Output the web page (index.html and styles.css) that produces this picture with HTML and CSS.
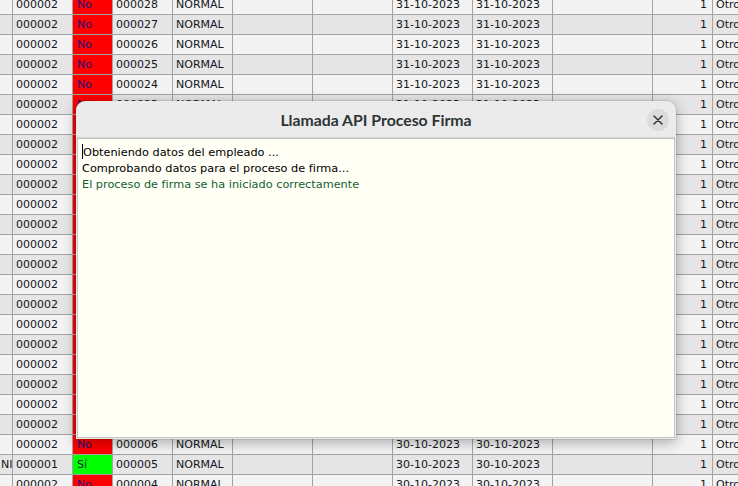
FILE: index.html
```html
<!DOCTYPE html>
<html lang="es">
<head>
<meta charset="utf-8">
<title>Llamada API Proceso Firma</title>
<link rel="stylesheet" href="styles.css">
</head>
<body>
<div class="grid">
<div class="row"><span class="c"></span><span class="c">000002</span><span class="c no">No</span><span class="c">000028</span><span class="c">NORMAL</span><span class="c"></span><span class="c"></span><span class="c">31-10-2023</span><span class="c">31-10-2023</span><span class="c"></span><span class="c num">1</span><span class="c">Otros</span></div>
<div class="row"><span class="c"></span><span class="c">000002</span><span class="c no">No</span><span class="c">000027</span><span class="c">NORMAL</span><span class="c"></span><span class="c"></span><span class="c">31-10-2023</span><span class="c">31-10-2023</span><span class="c"></span><span class="c num">1</span><span class="c">Otros</span></div>
<div class="row"><span class="c"></span><span class="c">000002</span><span class="c no">No</span><span class="c">000026</span><span class="c">NORMAL</span><span class="c"></span><span class="c"></span><span class="c">31-10-2023</span><span class="c">31-10-2023</span><span class="c"></span><span class="c num">1</span><span class="c">Otros</span></div>
<div class="row"><span class="c"></span><span class="c">000002</span><span class="c no">No</span><span class="c">000025</span><span class="c">NORMAL</span><span class="c"></span><span class="c"></span><span class="c">31-10-2023</span><span class="c">31-10-2023</span><span class="c"></span><span class="c num">1</span><span class="c">Otros</span></div>
<div class="row"><span class="c"></span><span class="c">000002</span><span class="c no">No</span><span class="c">000024</span><span class="c">NORMAL</span><span class="c"></span><span class="c"></span><span class="c">31-10-2023</span><span class="c">31-10-2023</span><span class="c"></span><span class="c num">1</span><span class="c">Otros</span></div>
<div class="row"><span class="c"></span><span class="c">000002</span><span class="c no">No</span><span class="c">000023</span><span class="c">NORMAL</span><span class="c"></span><span class="c"></span><span class="c">31-10-2023</span><span class="c">31-10-2023</span><span class="c"></span><span class="c num">1</span><span class="c">Otros</span></div>
<div class="row"><span class="c"></span><span class="c">000002</span><span class="c no">No</span><span class="c">000022</span><span class="c">NORMAL</span><span class="c"></span><span class="c"></span><span class="c">31-10-2023</span><span class="c">31-10-2023</span><span class="c"></span><span class="c num">1</span><span class="c">Otros</span></div>
<div class="row"><span class="c"></span><span class="c">000002</span><span class="c no">No</span><span class="c">000021</span><span class="c">NORMAL</span><span class="c"></span><span class="c"></span><span class="c">31-10-2023</span><span class="c">31-10-2023</span><span class="c"></span><span class="c num">1</span><span class="c">Otros</span></div>
<div class="row"><span class="c"></span><span class="c">000002</span><span class="c no">No</span><span class="c">000020</span><span class="c">NORMAL</span><span class="c"></span><span class="c"></span><span class="c">31-10-2023</span><span class="c">31-10-2023</span><span class="c"></span><span class="c num">1</span><span class="c">Otros</span></div>
<div class="row"><span class="c"></span><span class="c">000002</span><span class="c no">No</span><span class="c">000019</span><span class="c">NORMAL</span><span class="c"></span><span class="c"></span><span class="c">31-10-2023</span><span class="c">31-10-2023</span><span class="c"></span><span class="c num">1</span><span class="c">Otros</span></div>
<div class="row"><span class="c"></span><span class="c">000002</span><span class="c no">No</span><span class="c">000018</span><span class="c">NORMAL</span><span class="c"></span><span class="c"></span><span class="c">31-10-2023</span><span class="c">31-10-2023</span><span class="c"></span><span class="c num">1</span><span class="c">Otros</span></div>
<div class="row"><span class="c"></span><span class="c">000002</span><span class="c no">No</span><span class="c">000017</span><span class="c">NORMAL</span><span class="c"></span><span class="c"></span><span class="c">31-10-2023</span><span class="c">31-10-2023</span><span class="c"></span><span class="c num">1</span><span class="c">Otros</span></div>
<div class="row"><span class="c"></span><span class="c">000002</span><span class="c no">No</span><span class="c">000016</span><span class="c">NORMAL</span><span class="c"></span><span class="c"></span><span class="c">31-10-2023</span><span class="c">31-10-2023</span><span class="c"></span><span class="c num">1</span><span class="c">Otros</span></div>
<div class="row"><span class="c"></span><span class="c">000002</span><span class="c no">No</span><span class="c">000015</span><span class="c">NORMAL</span><span class="c"></span><span class="c"></span><span class="c">31-10-2023</span><span class="c">31-10-2023</span><span class="c"></span><span class="c num">1</span><span class="c">Otros</span></div>
<div class="row"><span class="c"></span><span class="c">000002</span><span class="c no">No</span><span class="c">000014</span><span class="c">NORMAL</span><span class="c"></span><span class="c"></span><span class="c">30-10-2023</span><span class="c">30-10-2023</span><span class="c"></span><span class="c num">1</span><span class="c">Otros</span></div>
<div class="row"><span class="c"></span><span class="c">000002</span><span class="c no">No</span><span class="c">000013</span><span class="c">NORMAL</span><span class="c"></span><span class="c"></span><span class="c">30-10-2023</span><span class="c">30-10-2023</span><span class="c"></span><span class="c num">1</span><span class="c">Otros</span></div>
<div class="row"><span class="c"></span><span class="c">000002</span><span class="c no">No</span><span class="c">000012</span><span class="c">NORMAL</span><span class="c"></span><span class="c"></span><span class="c">30-10-2023</span><span class="c">30-10-2023</span><span class="c"></span><span class="c num">1</span><span class="c">Otros</span></div>
<div class="row"><span class="c"></span><span class="c">000002</span><span class="c no">No</span><span class="c">000011</span><span class="c">NORMAL</span><span class="c"></span><span class="c"></span><span class="c">30-10-2023</span><span class="c">30-10-2023</span><span class="c"></span><span class="c num">1</span><span class="c">Otros</span></div>
<div class="row"><span class="c"></span><span class="c">000002</span><span class="c no">No</span><span class="c">000010</span><span class="c">NORMAL</span><span class="c"></span><span class="c"></span><span class="c">30-10-2023</span><span class="c">30-10-2023</span><span class="c"></span><span class="c num">1</span><span class="c">Otros</span></div>
<div class="row"><span class="c"></span><span class="c">000002</span><span class="c no">No</span><span class="c">000009</span><span class="c">NORMAL</span><span class="c"></span><span class="c"></span><span class="c">30-10-2023</span><span class="c">30-10-2023</span><span class="c"></span><span class="c num">1</span><span class="c">Otros</span></div>
<div class="row"><span class="c"></span><span class="c">000002</span><span class="c no">No</span><span class="c">000008</span><span class="c">NORMAL</span><span class="c"></span><span class="c"></span><span class="c">30-10-2023</span><span class="c">30-10-2023</span><span class="c"></span><span class="c num">1</span><span class="c">Otros</span></div>
<div class="row"><span class="c"></span><span class="c">000002</span><span class="c no">No</span><span class="c">000007</span><span class="c">NORMAL</span><span class="c"></span><span class="c"></span><span class="c">30-10-2023</span><span class="c">30-10-2023</span><span class="c"></span><span class="c num">1</span><span class="c">Otros</span></div>
<div class="row"><span class="c"></span><span class="c">000002</span><span class="c no">No</span><span class="c">000006</span><span class="c">NORMAL</span><span class="c"></span><span class="c"></span><span class="c">30-10-2023</span><span class="c">30-10-2023</span><span class="c"></span><span class="c num">1</span><span class="c">Otros</span></div>
<div class="row"><span class="c first">NIF</span><span class="c">000001</span><span class="c si">Sí</span><span class="c">000005</span><span class="c">NORMAL</span><span class="c"></span><span class="c"></span><span class="c">30-10-2023</span><span class="c">30-10-2023</span><span class="c"></span><span class="c num">1</span><span class="c">Otros</span></div>
<div class="row"><span class="c"></span><span class="c">000002</span><span class="c no">No</span><span class="c">000004</span><span class="c">NORMAL</span><span class="c"></span><span class="c"></span><span class="c">30-10-2023</span><span class="c">30-10-2023</span><span class="c"></span><span class="c num">1</span><span class="c">Otros</span></div>
</div>

<div class="dialog">
  <div class="titlebar">
    <span></span>
    <span class="title">Llamada API Proceso Firma</span>
    <span class="close"><svg width="10" height="10" viewBox="0 0 10 10"><path d="M1 1 L9 9 M9 1 L1 9" stroke="#333" stroke-width="1.5" fill="none" stroke-linecap="round"/></svg></span>
  </div>
  <div class="log">
    <div class="line"><span class="cursor"></span>Obteniendo datos del empleado ...</div>
    <div class="line">Comprobando datos para el proceso de firma...</div>
    <div class="line ok">El proceso de firma se ha iniciado correctamente</div>
  </div>
</div>
</body>
</html>
```

FILE: styles.css
```css
html, body {
  margin: 0;
  padding: 0;
  overflow: hidden;
  width: 738px;
  height: 486px;
  background: #f2f2f2;
}

.grid {
  margin-top: -5px;
  font-family: "DejaVu Sans", Verdana, sans-serif;
  font-size: 11px;
  color: #151520;
}

.row {
  display: grid;
  grid-template-columns: 13px 60px 40px 60px 60px 80px 80px 80px 80px 100px 60px 80px;
  height: 20px;
  box-sizing: border-box;
  border-bottom: 1px solid #a3a3a3;
  background: #f3f3f3;
}

.row:nth-child(even) {
  background: #e5e5e5;
}

.c {
  box-sizing: border-box;
  border-right: 1px solid #a3a3a3;
  padding-left: 3px;
  line-height: 19px;
  white-space: nowrap;
  overflow: hidden;
}

.c.first {
  padding-left: 1px;
}

.c.no {
  background: #ff0000;
  color: #1e1275;
  padding-left: 4px;
}

.c.si {
  background: #00ff00;
  color: #1e1e40;
  padding-left: 4px;
}

.c.num {
  text-align: right;
  padding-right: 5px;
}

.dialog {
  position: absolute;
  left: 76px;
  top: 101px;
  width: 600px;
  height: 338px;
  box-sizing: border-box;
  background: #ebebeb;
  border-radius: 9px 9px 0 0;
  box-shadow: 0 3px 14px rgba(0, 0, 0, 0.32), 0 0 0 1px rgba(0, 0, 0, 0.08);
  display: flex;
  flex-direction: column;
  padding: 0 1px 1px 1px;
}

.titlebar {
  height: 37px;
  display: grid;
  grid-template-columns: 1fr auto 1fr;
  align-items: center;
  border-bottom: 1px solid #d2d2d2;
  box-sizing: border-box;
}

.title {
  font-family: Lato, "DejaVu Sans", sans-serif;
  font-weight: 700;
  font-size: 15.8px;
  color: #2e3436;
  margin-top: 1px;
}

.close {
  justify-self: end;
  margin-right: 6px;
  width: 22px;
  height: 22px;
  border-radius: 50%;
  background: #dcdcdc;
  display: flex;
  align-items: center;
  justify-content: center;
  margin-top: 2px;
}

.close svg {
  display: block;
}

.log {
  flex: 1;
  background: #fffff5;
  border: 1px solid #c4c4c4;
  padding: 5px 4px;
  font-family: "DejaVu Sans", Verdana, sans-serif;
  font-size: 11.3px;
  color: #000;
}

.line {
  line-height: 16px;
  white-space: nowrap;
}

.line.ok {
  color: #0f5f32;
}

.cursor {
  display: inline-block;
  width: 1px;
  height: 15px;
  background: #000;
  vertical-align: -3px;
  margin-right: 0;
}
```
